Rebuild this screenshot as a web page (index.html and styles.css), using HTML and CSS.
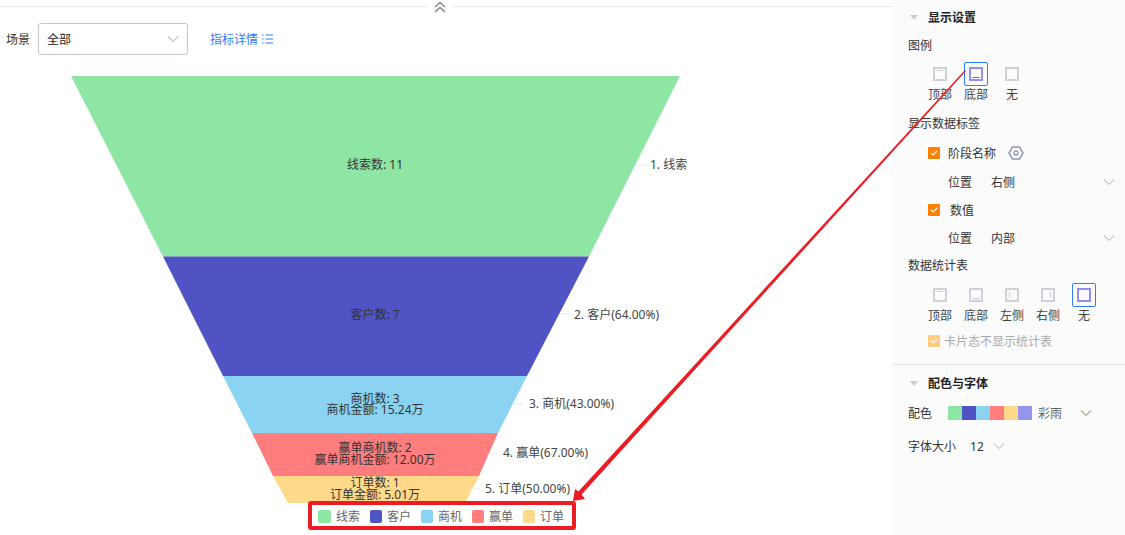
FILE: index.html
```html
<!DOCTYPE html>
<html lang="zh">
<head>
<meta charset="utf-8">
<title>漏斗图设置</title>
<link rel="stylesheet" href="styles.css">
</head>
<body>
<div class="page">
  <main class="main">
    <div class="collapse-bar">
      <span class="rule rule-left"></span>
      <svg class="collapse-icon" width="14" height="12" viewBox="0 0 14 12"><path d="M2 6 7 1.5 12 6M2 11 7 6.5 12 11" fill="none" stroke="#7d8794" stroke-width="1.4"/></svg>
      <span class="rule"></span>
    </div>
    <div class="toolbar">
      <span class="scene-label">场景</span>
      <div class="select">
        <span>全部</span>
        <svg width="12" height="8" viewBox="0 0 12 8"><path d="M1 1.5 6 6.5 11 1.5" fill="none" stroke="#c3c8d2" stroke-width="1.2"/></svg>
      </div>
      <a class="detail-link">指标详情
        <svg width="11" height="10" viewBox="0 0 11 10"><path d="M0 1h1.5M0 5h1.5M0 9h1.5M3.5 1H11M3.5 5H11M3.5 9H11" stroke="#2b7cff" stroke-width="1"/></svg>
      </a>
    </div>
    <svg class="chart" width="892" height="480" viewBox="0 55 892 480">
      <polygon points="71,76 680,76 589,256.500 163,256.500" fill="#8ee6a5"/>
      <polygon points="163,256.500 589,256.500 527,376 223,376" fill="#5053c3"/>
      <polygon points="223,376 527,376 498,433 252,433" fill="#8bd3f3"/>
      <polygon points="252,433 498,433 479,476 273,476" fill="#ff7d7d"/>
      <polygon points="273,476 479,476 465,503 288,503" fill="#ffd98a"/>
      <g class="leader">
        <path d="M637 165H646"/><path d="M560 314H570"/><path d="M513 404H523"/><path d="M487 454H498"/><path d="M470 489H480"/>
      </g>
      <g class="inner-label">
        <text x="375" y="168.500">线索数: 11</text>
        <text x="375" y="318.500">客户数: 7</text>
        <text x="375" y="402.500">商机数: 3</text>
        <text x="375" y="413.500">商机金额: 15.24万</text>
        <text x="375" y="451.500">赢单商机数: 2</text>
        <text x="375" y="463.500">赢单商机金额: 12.00万</text>
        <text x="375" y="486.500">订单数: 1</text>
        <text x="375" y="498.500">订单金额: 5.01万</text>
      </g>
      <g class="outer-label">
        <text x="650" y="169">1. 线索</text>
        <text x="574" y="318.500">2. 客户(64.00%)</text>
        <text x="529" y="408">3. 商机(43.00%)</text>
        <text x="503" y="457">4. 赢单(67.00%)</text>
        <text x="485" y="493">5. 订单(50.00%)</text>
      </g>
      <rect x="310" y="503" width="264" height="25" rx="1" fill="#fff"/>
      <g class="legend-text">
        <rect x="318" y="510" width="13" height="13" rx="2" fill="#8ee6a5"/><text x="336" y="521">线索</text>
        <rect x="370" y="510" width="12" height="13" rx="2" fill="#5053c3"/><text x="387" y="521">客户</text>
        <rect x="421" y="510" width="12" height="13" rx="2" fill="#8bd3f3"/><text x="438" y="521">商机</text>
        <rect x="472" y="510" width="12" height="13" rx="2" fill="#ff7d7d"/><text x="489" y="521">赢单</text>
        <rect x="523" y="510" width="12" height="13" rx="2" fill="#ffd98a"/><text x="540" y="521">订单</text>
      </g>
    </svg>
  </main>

  <aside class="panel">
    <section class="section first">
      <div class="row head"><i class="caret"></i>显示设置</div>
      <div class="row label m6">图例</div>
      <div class="tiles m6">
        <div class="tile"><span class="box"><svg class="glyph" viewBox="0 0 14 14"><rect x="1" y="1" width="12" height="12"/><path class="mark" d="M3.500 3.500h7"/></svg></span><span class="cap">顶部</span></div>
        <div class="tile on"><span class="box"><svg class="glyph" viewBox="0 0 14 14"><rect x="1" y="1" width="12" height="12"/><path class="mark" d="M3.500 10.500h7"/></svg></span><span class="cap">底部</span></div>
        <div class="tile"><span class="box"><svg class="glyph" viewBox="0 0 14 14"><rect x="1" y="1" width="12" height="12"/></svg></span><span class="cap">无</span></div>
      </div>
      <div class="row label m10">显示数据标签</div>
      <div class="row option m8">
        <span class="check"><svg width="12" height="12" viewBox="0 0 12 12"><path d="M3 6 5.200 8 9 4" fill="none" stroke="#fff" stroke-width="1.200"/></svg></span>
        <span class="opt-text">阶段名称</span>
        <svg class="hex" width="16" height="16" viewBox="0 0 16 16"><path d="M4.500 2h7L15 8l-3.500 6h-7L1 8z" fill="none" stroke="#8e99ab" stroke-width="1.500"/><circle cx="8" cy="8" r="2" fill="none" stroke="#8e99ab" stroke-width="1.300"/></svg>
      </div>
      <div class="row pos m7"><span class="pos-key">位置</span><span class="pos-val">右侧</span>
        <svg class="chev-end" width="12" height="8" viewBox="0 0 12 8"><path d="M1 1.500 6 6.500 11 1.500" fill="none" stroke="#c8ced8" stroke-width="1.200"/></svg>
      </div>
      <div class="row option m6">
        <span class="check"><svg width="12" height="12" viewBox="0 0 12 12"><path d="M3 6 5.200 8 9 4" fill="none" stroke="#fff" stroke-width="1.200"/></svg></span>
        <span class="opt-text wide">数值</span>
      </div>
      <div class="row pos m6"><span class="pos-key">位置</span><span class="pos-val">内部</span>
        <svg class="chev-end" width="12" height="8" viewBox="0 0 12 8"><path d="M1 1.500 6 6.500 11 1.500" fill="none" stroke="#c8ced8" stroke-width="1.200"/></svg>
      </div>
      <div class="row label m5">数据统计表</div>
      <div class="tiles m7">
        <div class="tile"><span class="box"><svg class="glyph" viewBox="0 0 14 14"><rect x="1" y="1" width="12" height="12"/><path class="mark" d="M3.500 3.500h7"/></svg></span><span class="cap">顶部</span></div>
        <div class="tile"><span class="box"><svg class="glyph" viewBox="0 0 14 14"><rect x="1" y="1" width="12" height="12"/><path class="mark" d="M3.500 10.500h7"/></svg></span><span class="cap">底部</span></div>
        <div class="tile"><span class="box"><svg class="glyph" viewBox="0 0 14 14"><rect x="1" y="1" width="12" height="12"/><path class="mark" d="M4.500 4v6"/></svg></span><span class="cap">左侧</span></div>
        <div class="tile"><span class="box"><svg class="glyph" viewBox="0 0 14 14"><rect x="1" y="1" width="12" height="12"/><path class="mark" d="M9.500 4v6"/></svg></span><span class="cap">右侧</span></div>
        <div class="tile on"><span class="box"><svg class="glyph" viewBox="0 0 14 14"><rect x="1" y="1" width="12" height="12"/></svg></span><span class="cap">无</span></div>
      </div>
      <div class="row option m7 disabled">
        <span class="check"><svg width="12" height="12" viewBox="0 0 12 12"><path d="M3 6 5.200 8 9 4" fill="none" stroke="#fff" stroke-width="1.200"/></svg></span>
        <span class="opt-text tight">卡片态不显示统计表</span>
      </div>
    </section>
    <section class="section second">
      <div class="row head"><i class="caret"></i>配色与字体</div>
      <div class="row label m8 palette-row">
        <span class="palette-key">配色</span>
        <span class="palette"><i class="c1"></i><i class="c2"></i><i class="c3"></i><i class="c4"></i><i class="c5"></i><i class="c6"></i></span>
        <span class="palette-name">彩雨</span>
        <svg width="12" height="8" viewBox="0 0 12 8"><path d="M1 1.500 6 6.500 11 1.500" fill="none" stroke="#b6a58f" stroke-width="1.200"/></svg>
      </div>
      <div class="row label m11 font-row">
        <span>字体大小</span><span class="font-size">12</span>
        <svg width="12" height="8" viewBox="0 0 12 8"><path d="M1 1.500 6 6.500 11 1.500" fill="none" stroke="#c8ced8" stroke-width="1.200"/></svg>
      </div>
    </section>
  </aside>

  <svg class="annotation" width="1125" height="535" viewBox="0 0 1125 535">
    <rect x="310" y="503" width="264" height="25" rx="1" fill="none" stroke="#ed1c24" stroke-width="4"/>
    <polygon points="965,70 966,71 581.600,494.500 585,499 573,501 575,489 578.400,491.500" fill="#ed1c24"/>
  </svg>
</div>
</body>
</html>
```

FILE: styles.css
```css
* { box-sizing: border-box; }
html, body { margin: 0; padding: 0; background: #fff; }
body {
  font-family: "Noto Sans", "Noto Sans CJK SC", sans-serif;
  font-size: 12px;
  color: #333;
}
.page { position: relative; display: flex; width: 1125px; height: 535px; overflow: hidden; }
.main { width: 892px; flex: none; }

.collapse-bar { display: flex; align-items: flex-start; height: 23px; }
.rule { flex: 1; height: 1px; margin-top: 6px; background: #e4e4ea; }
.rule-left { flex: 0 0 427px; }
.collapse-icon { margin: 1px 6px 0; flex: none; display: block; }

.toolbar { display: flex; align-items: center; height: 32px; padding-left: 6px; }
.scene-label { width: 32px; flex: none; }
.select {
  display: flex; align-items: center; justify-content: space-between;
  width: 150px; height: 32px; padding: 0 8px;
  border: 1px solid #c4c6cf; border-radius: 3px;
  color: #222;
}
.detail-link { display: flex; align-items: center; gap: 4px; margin-left: 22px; color: #2b7cff; }
.chart { display: block; }
.chart text { font-family: "Noto Sans", "Noto Sans CJK SC", sans-serif; font-size: 12px; }
.leader path { stroke: #e6e7ee; stroke-width: 1; fill: none; }
.inner-label text { text-anchor: middle; fill: #333; }
.outer-label text { fill: #444; }
.legend-text text { fill: #666; }

.panel { flex: 1; background: #fbfbfc; }
.section { padding-left: 16px; padding-right: 10px; }
.first { padding-top: 6px; padding-bottom: 12px; border-bottom: 1px solid #e4e4e8; }
.second { padding-top: 7px; }
.row { display: flex; align-items: center; height: 22px; }
.head { font-weight: 700; color: #222; padding-left: 20px; position: relative; }
.caret {
  position: absolute; left: 2px; top: 9px;
  border-left: 4px solid transparent; border-right: 4px solid transparent;
  border-top: 5px solid #c6cad3;
}
.m5 { margin-top: 5px; } .m6 { margin-top: 6px; } .m7 { margin-top: 7px; }
.m8 { margin-top: 8px; } .m10 { margin-top: 10px; } .m11 { margin-top: 11px; }

.tiles { display: flex; padding-left: 14px; }
.tile { width: 36px; display: flex; flex-direction: column; align-items: center; }
.box { width: 24px; height: 24px; display: flex; align-items: center; justify-content: center; border: 1px solid transparent; border-radius: 2px; }
.glyph { width: 14px; height: 14px; display: block; }
.glyph rect { fill: none; stroke: #cfd0d8; stroke-width: 2; }
.glyph .mark { fill: none; stroke: #cfd0d8; stroke-width: 1; }
.cap { height: 16px; line-height: 18px; color: #444; }
.on .box { border-color: #2b7cff; }
.on .glyph rect { stroke: #8f8ff5; }
.on .glyph .mark { stroke: #2b7cff; }

.option { padding-left: 20px; }
.check { width: 12px; height: 12px; background: #ff8000; border-radius: 1px; display: block; flex: none; }
.check svg { display: block; }
.opt-text { margin-left: 8px; color: #333; }
.opt-text.wide { margin-left: 10px; }
.opt-text.tight { margin-left: 4px; }
.hex { margin-left: 12px; }
.disabled .check { background: #ffcb80; }
.disabled .opt-text { color: #aaa; }

.pos { padding-left: 40px; }
.pos-key { width: 43px; flex: none; }
.chev-end { margin-left: auto; }

.palette-key { width: 40px; flex: none; }
.palette { display: flex; }
.palette i { display: block; width: 14px; height: 14px; }
.c1 { background: #8ee6a5; } .c2 { background: #5053c3; } .c3 { background: #8bd3f3; }
.c4 { background: #ff7d7d; } .c5 { background: #ffd98a; } .c6 { background: #9595f0; }
.palette-name { margin: 0 18px 0 6px; color: #666; }
.font-size { margin: 0 9px 0 14px; }

.annotation { position: absolute; left: 0; top: 0; pointer-events: none; }
```
